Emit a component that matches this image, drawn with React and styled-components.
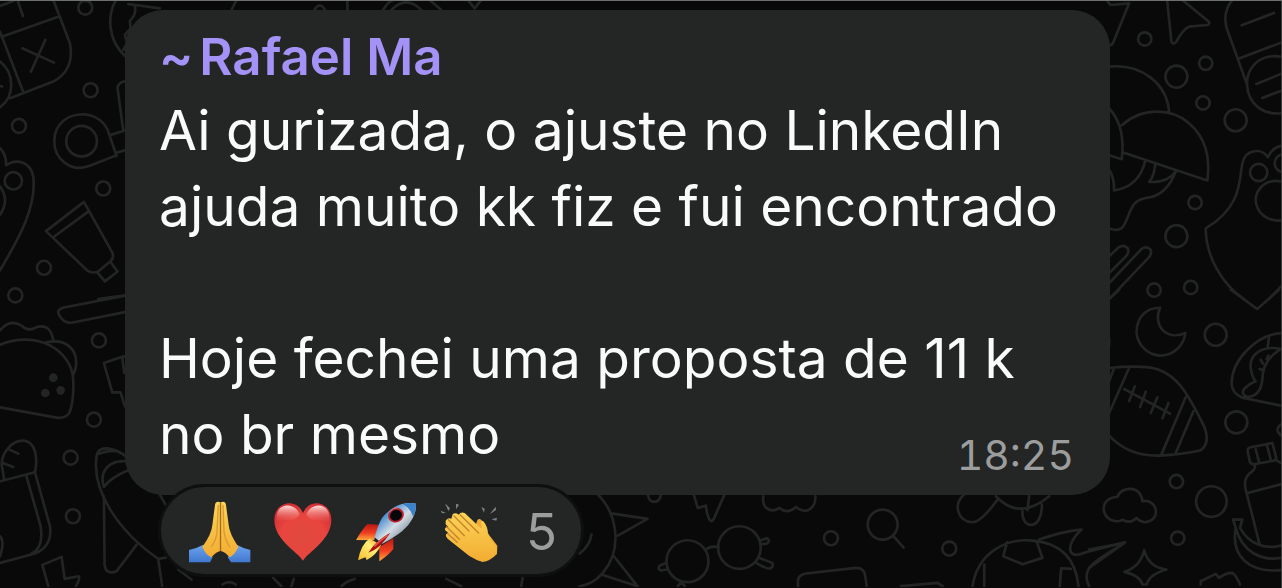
import React from "react";
import styled, { createGlobalStyle } from "styled-components";

const GlobalStyle = createGlobalStyle`
  * {
    box-sizing: border-box;
  }
  body {
    margin: 0;
    background-color: #090909;
    font-family: Inter, "Liberation Sans", sans-serif;
  }
`;

const StyledChat = styled.main`
  position: relative;
  min-height: 100vh;
  padding: 9px 171px 8px 125px;
  border-top: 1px solid #6c706e;
  border-right: 1px solid #3c3e3e;
  overflow: hidden;
`;

const StyledWallpaper = styled.svg`
  position: absolute;
  top: -1px;
  left: 0;
  width: 100%;
  height: 100%;
  fill: none;
  stroke: #232424;
  stroke-width: 8;
  stroke-linecap: round;
  stroke-linejoin: round;
`;

const StyledBubble = styled.article`
  position: relative;
  padding: 12px 36px 23px 34px;
  border-radius: 38px;
  background-color: #242626;
`;

const StyledAuthor = styled.h2`
  display: flex;
  gap: 6px;
  margin: 0;
  color: #a492f6;
  font-size: 51px;
  font-weight: 600;
  line-height: 70px;
`;

const StyledBody = styled.div`
  display: grid;
`;

const StyledText = styled.p`
  grid-area: 1 / 1;
  margin: 0;
  color: #fafafa;
  font-size: 55px;
  line-height: 76px;
  white-space: pre-line;
`;

const StyledTime = styled.time`
  grid-area: 1 / 1;
  align-self: end;
  justify-self: end;
  color: #9c9d9d;
  font-size: 41px;
  font-variant-numeric: tabular-nums;
  line-height: 34px;
`;

const StyledReactions = styled.button`
  position: relative;
  display: flex;
  align-items: center;
  gap: 21px;
  height: 93px;
  margin: -11px 0 0 33px;
  padding: 2px 24px 0 28px;
  border: 3px solid #0e0f0f;
  border-radius: 47px;
  background-color: #242626;
  font-family: inherit;
  cursor: pointer;
`;

const StyledEmoji = styled.svg`
  flex: none;
  width: 62px;
  height: 62px;
`;

const StyledCount = styled.span`
  margin-left: 5px;
  color: #9c9d9d;
  font-size: 51px;
  line-height: 64px;
`;

const message = `Ai gurizada, o ajuste no LinkedIn
ajuda muito kk fiz e fui encontrado

Hoje fechei uma proposta de 11 k
no br mesmo`;

const Wallpaper = () => (
  <StyledWallpaper
    viewBox="0 0 1282 588"
    preserveAspectRatio="xMinYMin slice"
    aria-hidden="true"
  >
    {/* left side, top */}
    <g transform="scale(0.3333)">
      <circle cx="256" cy="23" r="21" />
      <circle cx="272" cy="271" r="21" />
      <circle cx="57" cy="378" r="21" />
      <circle cx="310" cy="566" r="21" />
      <circle cx="132" cy="804" r="21" />
      <circle cx="46" cy="887" r="21" />
      <path d="M160 0L210 130Q225 210 160 245L30 295M5 110L175 50M0 95L68 272M0 18L40 3M54 5L69 48M67 145L162 188M136 120L93 215M0 185C45 220 45 290 0 322M0 258L6 260" />
      <path d="M345 468L270 498C210 520 162 475 163 423C163 370 205 343 250 343C290 345 315 368 325 395L350 468ZM332 405L375 392M352 458L375 451M370 392L353 265Q352 248 380 242" />
      <circle cx="245" cy="424" r="46" />
      <circle cx="40" cy="543" r="26" />
      <path d="M0 445Q20 465 18 496C50 475 90 485 100 530C110 620 60 710 0 812M0 560Q30 600 0 645" />
      <path d="M252 606L138 694L262 812Q274 822 294 816L330 786Q343 776 338 760ZM264 636L163 710M294 820L315 845L353 815L333 788" />
      <path d="M348 0C320 50 325 120 375 168M385 12L480 25M405 18Q410 45 390 62L392 85L375 105L382 130L370 150M295 898L375 887" />
    </g>
    {/* left side, bottom */}
    <g transform="translate(0 290) scale(0.3333)">
      <path d="M375 18L188 54Q168 62 178 76Q190 100 215 99L375 67" />
      <circle cx="297" cy="152" r="21" />
      <circle cx="282" cy="390" r="21" />
      <circle cx="212" cy="504" r="21" />
      <circle cx="219" cy="680" r="21" />
      <path d="M0 122Q30 85 65 108Q85 128 110 112Q150 100 160 150M0 165C110 120 215 180 220 270Q222 340 208 370Q195 388 170 384L0 353M138 158C195 145 230 175 229 222Q228 240 220 255" />
      <g fill="#232424">
        <circle cx="160" cy="264" r="9" />
        <circle cx="136" cy="310" r="9" />
        <circle cx="182" cy="302" r="9" />
      </g>
      <path d="M375 200L367 201L312 220L337 308L362 308L375 350M367 201L373 250" />
      <path d="M0 575L105 548C115 500 105 455 70 453C35 452 5 490 5 525L12 567M28 480L55 492M8 520L40 532M80 562L122 710Q132 775 95 792M105 548L150 710Q158 770 105 792L0 820M0 740Q15 755 0 800" />
      <path d="M385 505C340 470 295 465 290 500C275 600 350 720 475 808L500 804M298 492Q330 480 350 485M380 515C335 510 295 540 312 592Q330 565 385 542M312 620L314 825Q318 858 350 845L410 766M475 808L487 890M480 615L497 645" />
      <path d="M145 890L127 826L185 802L194 868L236 860Q242 865 228 890" />
    </g>
    {/* strip above the bubble */}
    <g transform="translate(120 0) scale(0.3333)">
      <path d="M350 0L335 30M585 28Q600 5 615 28M683 0V30M790 30Q805 5 820 0M815 30Q860-15 905 30M930 0L965 30M1045 0L1065 25L1085 0" />
    </g>
    {/* right side, top */}
    <g transform="translate(1090 0) scale(0.3333)">
      <circle cx="167" cy="117" r="20" />
      <circle cx="350" cy="190" r="20" />
      <circle cx="342" cy="309" r="20" />
      <circle cx="318" cy="608" r="20" />
      <circle cx="195" cy="871" r="20" />
      <circle cx="305" cy="863" r="20" />
      <circle cx="262" cy="230" r="33" />
      <circle cx="440" cy="361" r="33" />
      <circle cx="262" cy="709" r="33" />
      <path d="M56 5L64 15L120 10L72 128Q68 137 60 135M234 0L247 125Q252 137 262 125Q280 90 300 80L355 75Q365 70 358 64L280 0" />
      <path d="M430 0Q400 35 413 85L472 248M458 76L555 39M450 176L576 128" />
      <path d="M576 170C505 160 472 210 474 255C478 320 530 345 576 340M502 252L576 222M520 294L576 273" />
      <path d="M60 200C155 190 235 250 240 338M60 325Q110 380 98 478L60 466M98 376C160 320 250 325 300 370Q370 430 355 542L102 458M60 510Q75 530 75 572Q150 560 168 484M198 496Q195 530 180 546Q235 550 260 515Q235 580 185 592C120 600 130 630 105 675Q95 698 60 686" />
      <path d="M60 770L88 743Q105 733 115 745Q122 755 112 768L60 820M60 850L158 747Q172 738 183 748Q190 758 180 772L60 898" />
      <path d="M576 438Q548 445 537 472C520 445 470 445 460 490C450 540 460 620 350 686C350 770 400 855 465 898M540 898L576 860" />
      <circle cx="509" cy="518" r="26" />
      <circle cx="584" cy="490" r="27" />
      <path d="M576 545C535 535 500 565 500 602C503 640 535 665 576 662" />
    </g>
    {/* right side, bottom */}
    <g transform="translate(1090 290) scale(0.3333)">
      <path d="M425 0L505 58L570 0M60 28L90 0M60 145V168" />
      <circle cx="380" cy="135" r="33" />
      <circle cx="442" cy="398" r="33" />
      <circle cx="367" cy="636" r="46" />
      <circle cx="262" cy="576" r="20" />
      <circle cx="266" cy="746" r="20" />
      <path d="M213 54C150 55 125 120 155 165C200 225 280 195 289 130C230 155 190 105 213 54Z" />
      <path d="M60 235Q125 228 180 233C265 245 300 320 345 410Q365 460 335 482Q280 495 210 498C140 500 90 470 60 438M75 235L60 275M120 235L60 370M105 298L243 372M137 290L120 334M170 306L153 352M205 323L185 370M238 340L220 386M290 322L217 495M313 365L260 490" />
      <path d="M576 130C500 135 425 215 428 285Q430 312 460 324L576 348M540 142L536 172M576 178C520 165 480 195 485 235Q490 265 500 275M576 178Q520 210 520 270Q515 320 475 322Q455 315 465 298Q485 280 500 275M515 210L522 222M538 198L533 208M512 238L525 242" />
      <path d="M576 405Q555 420 576 437M476 485Q475 475 485 473L550 460L562 505Q560 513 550 514L495 524Q485 524 482 515ZM500 478L510 517M535 470L545 510M498 527Q500 540 480 553Q463 570 470 600L512 765M476 610L576 584M562 512L576 520" />
      <path d="M432 690L460 690L453 715C480 765 530 780 576 768M432 690L440 715C425 800 480 850 576 842M440 715C460 790 520 815 576 805" />
      <path d="M84 695C35 695 25 625 85 622C95 590 155 585 160 635C205 625 220 695 165 698Q150 695 142 685Q120 705 100 690Q95 695 84 695Z" />
      <path d="M0 780L106 760L0 835M165 782Q180 835 232 840Q180 855 173 885L160 885Q155 860 106 847Q155 830 165 782ZM335 885V875L380 853L390 865Q410 850 430 850Q440 855 453 885" />
    </g>
    {/* below the bubble */}
    <g transform="translate(560 480) scale(0.3333)">
      <path d="M110 40C175 100 190 210 130 280Q100 315 60 320M160 102L264 118L175 168M163 230L234 320L125 285M96 165Q90 200 60 222" />
      <path d="M265 45Q268 67 285 67Q302 65 304 45M403 45L415 85L440 78Q440 100 450 120Q457 130 463 118L495 45M612 50C605 90 640 100 660 85Q685 105 710 82C745 110 770 80 768 50" />
      <circle cx="384" cy="245" r="63" />
      <circle cx="540" cy="204" r="64" />
      <path d="M440 210Q455 197 478 203M605 182L622 176Q635 182 623 192L606 194M600 235L638 250Q645 260 632 267Q620 268 590 250M320 250L302 258Q292 267 304 273L322 270M355 320L365 308L376 320" />
      <circle cx="815" cy="176" r="21" />
      <path d="M716 320V300Q720 285 740 282L890 265Q915 265 918 290L922 320" />
    </g>
    <g transform="translate(850 480) scale(0.3333)">
      <circle cx="100" cy="135" r="45" />
      <path d="M131 168L163 204" />
      <circle cx="300" cy="207" r="21" />
      <path d="M345 45C310 75 325 125 370 128Q395 128 445 60M440 50Q510 125 600 50M540 45L535 92M520 95C515 150 580 155 578 75" />
      <path d="M370 320C385 220 470 175 550 183C640 190 680 240 688 320M474 188L462 230L520 254L580 235L563 188M405 255V320M632 320L636 266L665 268M570 180Q640 155 697 150C650 195 650 245 710 218L828 188C750 240 690 260 720 320M155 320L265 310L280 320" />
    </g>
    <g transform="translate(150 480) scale(0.3333)">
      <path d="M85 270L125 300M218 315Q238 300 258 315M370 295L395 320M432 298L425 320M575 320Q590 305 615 298M890 298L935 320M1120 290L1115 320" />
    </g>
  </StyledWallpaper>
);

const PrayEmoji = () => (
  <StyledEmoji viewBox="117 63 186 186" role="img" aria-label="mãos em oração">
    <defs>
      <linearGradient id="skin" x1="0" y1="0" x2="0" y2="1">
        <stop offset="0" stopColor="#fbd457" />
        <stop offset="1" stopColor="#f2ad33" />
      </linearGradient>
      <linearGradient id="sleeve" x1="0" y1="0" x2="0" y2="1">
        <stop offset="0" stopColor="#6fa3ee" />
        <stop offset="1" stopColor="#3f78cf" />
      </linearGradient>
    </defs>
    <path d="M117 210Q140 205 160 194L188 232L180 247H117Z" fill="url(#sleeve)" />
    <path d="M301 210Q280 205 260 194L233 232L243 247H301Z" fill="url(#sleeve)" />
    <path
      d="M211 67Q197 62 195 75L187 135Q186 160 157 201Q168 225 184 232Q198 216 211 213Z"
      fill="url(#skin)"
    />
    <path
      d="M212 67Q226 62 228 75L236 135Q238 160 265 201Q254 225 239 232Q226 216 212 213Z"
      fill="url(#skin)"
    />
    <path d="M211.500 69V213" stroke="#a66b18" strokeWidth="4" />
    <path
      d="M205 75L201 155Q200 178 184 200M219 75L222 155Q225 180 240 202"
      fill="none"
      stroke="#dc9932"
      strokeWidth="4"
    />
  </StyledEmoji>
);

const HeartEmoji = () => (
  <StyledEmoji viewBox="365 63 186 186" role="img" aria-label="coração">
    <defs>
      <radialGradient id="heart" cx="0.500" cy="0.600" r="0.650">
        <stop offset="0" stopColor="#df493c" />
        <stop offset="0.600" stopColor="#e8453f" />
        <stop offset="1" stopColor="#d02b31" />
      </radialGradient>
      <linearGradient id="shine" x1="0" y1="0" x2="0" y2="1">
        <stop offset="0" stopColor="#ffe3df" />
        <stop offset="1" stopColor="#ed5951" stopOpacity="0" />
      </linearGradient>
    </defs>
    <path
      d="M458 242C440 213 372 180 372 119C372 65 438 52 458 99C478 52 543 65 543 119C543 180 476 213 458 242Z"
      fill="url(#heart)"
    />
    <path d="M379 112C378 67 434 65 448 103Q435 125 410 120Q392 120 379 130Z" fill="url(#shine)" />
    <path d="M468 103C482 65 537 67 537 112V130Q522 120 506 120Q480 125 468 103Z" fill="url(#shine)" />
  </StyledEmoji>
);

const RocketEmoji = () => (
  <StyledEmoji viewBox="45 63 186 186" role="img" aria-label="foguete">
    <defs>
      <linearGradient id="hull" x1="0" y1="0" x2="1" y2="1">
        <stop offset="0.250" stopColor="#3e88ce" />
        <stop offset="0.520" stopColor="#d5dde4" />
        <stop offset="0.700" stopColor="#98a6b3" />
        <stop offset="1" stopColor="#3975b4" />
      </linearGradient>
      <linearGradient id="fin" x1="0" y1="0" x2="0" y2="1">
        <stop offset="0" stopColor="#b91713" />
        <stop offset="0.550" stopColor="#ef3f20" />
        <stop offset="1" stopColor="#fbad3d" />
      </linearGradient>
      <linearGradient id="flame" x1="1" y1="0" x2="0" y2="1">
        <stop offset="0" stopColor="#f28b20" />
        <stop offset="0.400" stopColor="#fff078" />
        <stop offset="1" stopColor="#f5b928" />
      </linearGradient>
    </defs>
    <path d="M118 134L82 132Q65 150 48 180L102 181Z" fill="url(#fin)" />
    <path d="M160 174V207Q145 226 118 244L118 202Z" fill="url(#fin)" />
    <path
      d="M88 176Q62 194 54 241L76 232L80 240Q110 224 124 194Z"
      fill="url(#flame)"
    />
    <path
      d="M228 71C189 63 151 82 126 114Q113 136 104 172L127 191Q151 180 174 163C211 137 230 103 228 71Z"
      fill="url(#hull)"
    />
    <path d="M188 72Q214 66 228 71Q229 90 220 111Q211 84 188 72Z" fill="#3b82c9" />
    <path d="M151 158Q107 182 85 218Q119 208 151 158Z" fill="#a90f15" />
    <path d="M142 166Q121 180 103 199" fill="none" stroke="#e45345" strokeWidth="5" />
    <ellipse cx="168" cy="106" rx="24" ry="21" fill="#b81e27" transform="rotate(-28 168 106)" />
    <ellipse cx="168" cy="106" rx="18" ry="16" fill="#08080a" transform="rotate(-28 168 106)" />
    <path d="M148 96Q158 82 174 83" fill="none" stroke="#ea7678" strokeWidth="3" />
  </StyledEmoji>
);

const ClapEmoji = () => (
  <StyledEmoji viewBox="291 61 186 186" role="img" aria-label="palmas">
    <path
      d="M404 133L409 119Q414 111 421 118Q432 131 433 149L452 173L469 195L468 220Q448 241 424 244L405 236Z"
      fill="#efac35"
    />
    <path
      d="M314 120Q320 109 331 114L335 101Q343 94 353 102Q361 91 372 98L413 137Q426 149 421 131Q418 116 427 122Q439 136 441 157Q445 176 462 191Q474 207 457 225Q437 247 409 239L385 226L320 174Q312 166 316 160L322 157L312 148Q310 139 322 139L314 131Z"
      fill="url(#skin)"
    />
    <path
      d="M322 117L370 165M339 106L384 151M358 103L397 141M317 138L355 176M321 160L349 185M397 141L413 157"
      fill="none"
      stroke="#c9822a"
      strokeWidth="4"
      strokeLinecap="round"
    />
    <path
      d="M312 68L327 83L322 91ZM345 69L354 72L345 86ZM299 90L315 97L303 98ZM421 79L431 84L429 96ZM464 78L465 88L446 101ZM468 111L466 120L451 116Z"
      fill="#7b8083"
    />
  </StyledEmoji>
);

const App = () => {
  return (
    <>
      <GlobalStyle />
      <StyledChat>
        <Wallpaper />
        <StyledBubble>
          <StyledAuthor>
            <span>~</span>
            <span>Rafael Ma</span>
          </StyledAuthor>
          <StyledBody>
            <StyledText>{message}</StyledText>
            <StyledTime dateTime="18:25">18:25</StyledTime>
          </StyledBody>
        </StyledBubble>
        <StyledReactions type="button">
          <PrayEmoji />
          <HeartEmoji />
          <RocketEmoji />
          <ClapEmoji />
          <StyledCount>5</StyledCount>
        </StyledReactions>
      </StyledChat>
    </>
  );
};

export default App;
